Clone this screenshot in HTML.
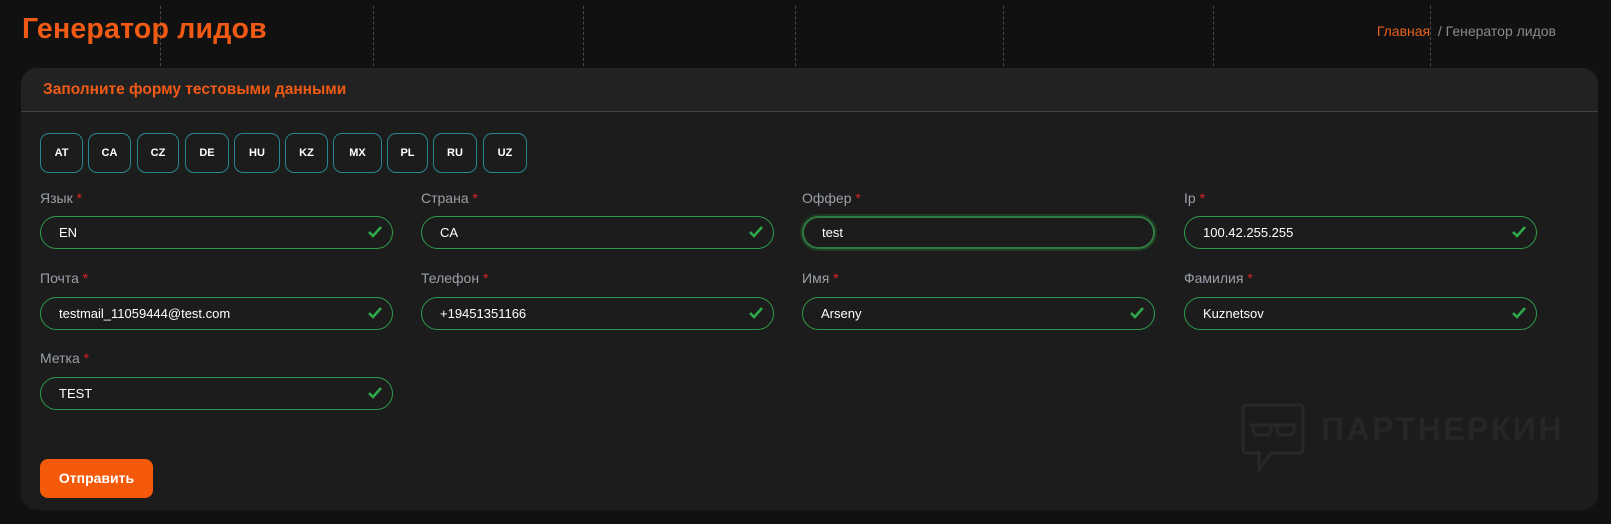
<!DOCTYPE html>
<html><head><meta charset="utf-8"><style>
*{box-sizing:border-box;margin:0;padding:0}
body{width:1611px;height:524px;background:#111;font-family:"Liberation Sans","DejaVu Sans",sans-serif;position:relative;overflow:hidden}
.dash{position:absolute;top:6px;height:60px;width:0;border-left:1px dashed #4a4a4a}
h1{position:absolute;left:22px;top:13px;font-size:28.5px;font-weight:bold;color:#f05a14;letter-spacing:0.2px}
.bc{position:absolute;right:55px;top:23px;font-size:14px;color:#8a8a8a}
.bc span{color:#e8601c}
.card{position:absolute;left:21px;top:68px;width:1577px;height:442px;background:#1c1c1c;border-radius:16px;overflow:hidden}
.hd{height:44px;background:#222;border-bottom:1px solid #444;padding:13px 0 0 22px;font-size:15.5px;font-weight:bold;color:#f05a14}
.b{position:absolute;top:65px;height:40px;border:1px solid #2a8593;border-radius:9px;color:#fff;font-size:11px;font-weight:bold;text-align:center;line-height:38px}
.lbl{position:absolute;font-size:14px;color:#9aa0a8}
.lbl i{color:#d22;font-style:normal}
.in{position:absolute;width:353px;height:33px;border:1px solid #2e9c4a;border-radius:17px;color:#fff;font-size:13px;padding-left:18px;line-height:31px}
.in svg{position:absolute;right:9px;top:8px}
.send{position:absolute;left:19px;top:391px;width:113px;height:39px;background:#f55a0a;border-radius:8px;color:#fff;font-weight:bold;font-size:14px;text-align:center;line-height:39px}
.wm{position:absolute;left:1300px;top:343px;font-size:32px;font-weight:bold;color:#262626;letter-spacing:2.5px}
</style></head><body>
<div class="dash" style="left:160px"></div><div class="dash" style="left:373px"></div><div class="dash" style="left:583px"></div><div class="dash" style="left:795px"></div><div class="dash" style="left:1003px"></div><div class="dash" style="left:1213px"></div><div class="dash" style="left:1430px"></div>
<h1>Генератор лидов</h1>
<div class="bc"><span>Главная</span> &nbsp;/ Генератор лидов</div>
<div class="card">
<div class="hd">Заполните форму тестовыми данными</div>
<div class="b" style="left:19px;width:43px">AT</div>
<div class="b" style="left:67px;width:43px">CA</div>
<div class="b" style="left:116px;width:42px">CZ</div>
<div class="b" style="left:164px;width:44px">DE</div>
<div class="b" style="left:213px;width:46px">HU</div>
<div class="b" style="left:264px;width:43px">KZ</div>
<div class="b" style="left:312px;width:49px">MX</div>
<div class="b" style="left:366px;width:41px">PL</div>
<div class="b" style="left:412px;width:44px">RU</div>
<div class="b" style="left:462px;width:44px">UZ</div>

<div class="lbl" style="left:19px;top:122px">Язык <i>*</i></div>
<div class="lbl" style="left:400px;top:122px">Страна <i>*</i></div>
<div class="lbl" style="left:781px;top:122px">Оффер <i>*</i></div>
<div class="lbl" style="left:1163px;top:122px">Ip <i>*</i></div>
<div class="in" style="left:19px;top:148px">EN<svg width="16" height="14" viewBox="0 0 16 14"><path d="M2 7l4 4 8-9" stroke="#2ea84b" stroke-width="2.6" fill="none"/></svg></div>
<div class="in" style="left:400px;top:148px">CA<svg width="16" height="14" viewBox="0 0 16 14"><path d="M2 7l4 4 8-9" stroke="#2ea84b" stroke-width="2.6" fill="none"/></svg></div>
<div class="in" style="left:781px;top:148px;border:2px solid #2f7a3e;box-shadow:0 0 0 2px #1f3a25;line-height:29px">test</div>
<div class="in" style="left:1163px;top:148px">100.42.255.255<svg width="16" height="14" viewBox="0 0 16 14"><path d="M2 7l4 4 8-9" stroke="#2ea84b" stroke-width="2.6" fill="none"/></svg></div>

<div class="lbl" style="left:19px;top:202px">Почта <i>*</i></div>
<div class="lbl" style="left:400px;top:202px">Телефон <i>*</i></div>
<div class="lbl" style="left:781px;top:202px">Имя <i>*</i></div>
<div class="lbl" style="left:1163px;top:202px">Фамилия <i>*</i></div>
<div class="in" style="left:19px;top:229px">testmail_11059444@test.com<svg width="16" height="14" viewBox="0 0 16 14"><path d="M2 7l4 4 8-9" stroke="#2ea84b" stroke-width="2.6" fill="none"/></svg></div>
<div class="in" style="left:400px;top:229px">+19451351166<svg width="16" height="14" viewBox="0 0 16 14"><path d="M2 7l4 4 8-9" stroke="#2ea84b" stroke-width="2.6" fill="none"/></svg></div>
<div class="in" style="left:781px;top:229px">Arseny<svg width="16" height="14" viewBox="0 0 16 14"><path d="M2 7l4 4 8-9" stroke="#2ea84b" stroke-width="2.6" fill="none"/></svg></div>
<div class="in" style="left:1163px;top:229px">Kuznetsov<svg width="16" height="14" viewBox="0 0 16 14"><path d="M2 7l4 4 8-9" stroke="#2ea84b" stroke-width="2.6" fill="none"/></svg></div>

<div class="lbl" style="left:19px;top:282px">Метка <i>*</i></div>
<div class="in" style="left:19px;top:309px">TEST<svg width="16" height="14" viewBox="0 0 16 14"><path d="M2 7l4 4 8-9" stroke="#2ea84b" stroke-width="2.6" fill="none"/></svg></div>

<svg style="position:absolute;left:1220px;top:335px" width="64" height="70" viewBox="0 0 64 70"><path d="M5 2h54a3 3 0 0 1 3 3v42a3 3 0 0 1-3 3H30l-12 17v-17H5a3 3 0 0 1-3-3V5a3 3 0 0 1 3-3z" fill="none" stroke="#282828" stroke-width="3"/><path d="M9 22h46M12 22v5a5 5 0 0 0 5 5h8a5 5 0 0 0 5-5v-5M36 22v5a5 5 0 0 0 5 5h7a5 5 0 0 0 5-5v-5" fill="none" stroke="#282828" stroke-width="3"/></svg>
<div class="wm">ПАРТНЕРКИН</div>
<div class="send">Отправить</div>
</div>
</body></html>
